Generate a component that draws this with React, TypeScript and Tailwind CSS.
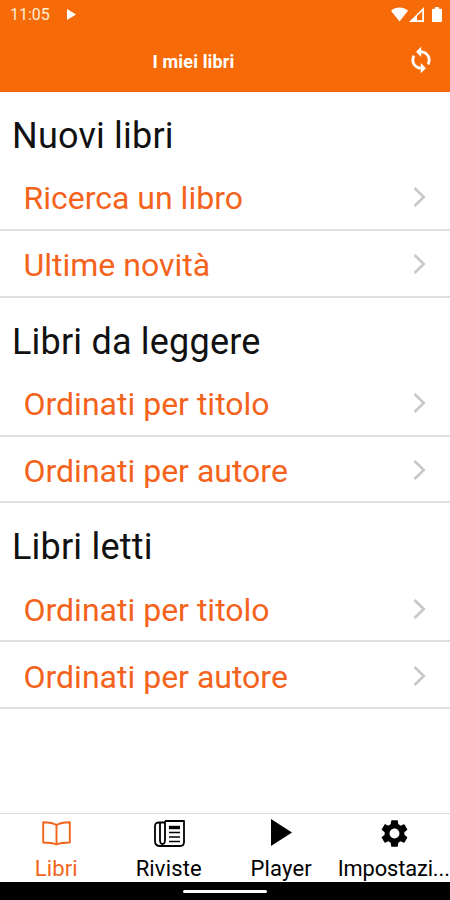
import type { ReactNode } from "react";
import { MdSettings } from "react-icons/md";
import clsx from "clsx";

const sections = [
  { title: "Nuovi libri", items: ["Ricerca un libro", "Ultime novità"] },
  { title: "Libri da leggere", items: ["Ordinati per titolo", "Ordinati per autore"] },
  { title: "Libri letti", items: ["Ordinati per titolo", "Ordinati per autore"] },
];

const SyncIcon = () => (
  <svg className="-mt-[2px] ml-auto" width="28" height="28" viewBox="0 0 24 24" fill="currentColor" stroke="currentColor" strokeWidth="0.4">
    <path d="M12 4V1L8 5l4 4V6c3.310 0 6 2.690 6 6 0 1.010-.250 1.970-.700 2.800l1.460 1.460A7.930 7.930 0 0 0 20 12c0-4.420-3.580-8-8-8z" />
    <path d="M12 18c-3.310 0-6-2.690-6-6 0-1.010.250-1.970.700-2.800L5.240 7.740A7.930 7.930 0 0 0 4 12c0 4.420 3.580 8 8 8v3l4-4-4-4v3z" />
  </svg>
);

const BookIcon = () => (
  <svg className="ml-[1px]" width="29" height="25" viewBox="0 0 29 25" fill="none" stroke="currentColor" strokeWidth="1.9" strokeLinejoin="round">
    <path d="M14.5 4 C11.5 2 6 1.2 1.2 1.2 V21.5 C6 21.5 11.5 22.2 14.5 23.5 C17.5 22.2 23 21.5 27.8 21.5 V1.2 C23 1.2 17.5 2 14.5 4 Z" />
    <path d="M14.5 4 V23.5" />
  </svg>
);

const NewspaperIcon = () => (
  <svg className="ml-[1px]" width="31" height="27" viewBox="0 0 31 27" fill="none" stroke="currentColor" strokeWidth="1.8" strokeLinejoin="round">
    <path d="M11 1 H30 V22 Q30 26 26 26 H6 Q1 26 1 21 V6 Q1 2.5 5 2.5 H11" />
    <path d="M11 1 V20 Q11 24 8.5 24 Q6 24 6 20 V2.5" />
    <path d="M15 7.500 H26" strokeWidth="3.400" />
    <path d="M15 12.500 H26 M15 17 H26 M15 21.500 H26" strokeWidth="1.600" />
  </svg>
);

const PlayIcon = () => (
  <svg className="-mt-[1px]" width="21" height="27" viewBox="0 0 21 27" fill="currentColor">
    <path d="M0 0 L21 13.5 L0 27 Z" />
  </svg>
);

const tabs: { label: string; icon: ReactNode; active?: boolean }[] = [
  { label: "Libri", icon: <BookIcon />, active: true },
  { label: "Riviste", icon: <NewspaperIcon /> },
  { label: "Player", icon: <PlayIcon /> },
  { label: "Impostazi...", icon: <MdSettings className="ml-[2px] size-[33px] shrink-0" /> },
];

const StatusBar = () => (
  <div className="flex h-[30px] items-center justify-between pl-[10px] pr-2 text-white">
    <div className="flex items-center gap-[17px]">
      <span className="text-[16px] text-orange-100">11:05</span>
      <svg className="-mt-[1px]" width="9" height="11" viewBox="0 0 9 11" fill="currentColor">
        <path d="M0 0 L9 5.5 L0 11 Z" />
      </svg>
    </div>
    <div className="-mt-[2px] flex items-center">
      <svg width="17" height="15" viewBox="0 0 17 15" fill="currentColor">
        <path d="M8.5 14.5 L0 3.7 C5 -0.6 12 -0.6 17 3.7 Z" />
      </svg>
      <svg className="ml-[1px]" width="15" height="15" viewBox="0 0 15 15" fill="currentColor">
        <path fillRule="evenodd" d="M0 15 L15 0 V15 Z M8 9 V13.200 H13.200 V4.300 Z" />
      </svg>
      <svg className="ml-[8px]" width="10" height="15" viewBox="0 0 10 15" fill="currentColor">
        <path d="M3 0 H7 V1.7 H9 Q10 1.7 10 2.7 V14 Q10 15 9 15 H1 Q0 15 0 14 V2.7 Q0 1.7 1 1.7 H3 Z" />
      </svg>
    </div>
  </div>
);

const Row = ({ label }: { label: string }) => (
  <div className="flex h-[66.95px] items-center justify-between border-b-2 border-[#e0e0e0] pl-[23.5px] pr-6">
    <span className="pt-[4px] text-[32px] leading-none text-[#f4631c]">{label}</span>
    <svg className="mt-[2px]" width="13" height="20" viewBox="0 0 13 20" fill="none" stroke="#c7c7cc" strokeWidth="2.6">
      <path d="M1.5 1 L10.8 10 L1.5 19" />
    </svg>
  </div>
);

const App = () => {
  return (
    <div className="flex h-[900px] w-[450px] flex-col overflow-hidden bg-white font-[Roboto,sans-serif]">
      <header className="h-[92px] shrink-0 border-b border-[#e85f08] bg-[#f66b08] text-white">
        <StatusBar />
        <div className="flex h-[62px] items-center pr-[15px]">
          <h1 className="w-[387px] text-center text-[18px] font-bold tracking-[0.15px]">I miei libri</h1>
          <SyncIcon />
        </div>
      </header>

      <main className="flex-1">
        {sections.map((section) => (
          <section key={section.title}>
            <h2 className="flex h-[71.85px] items-center pl-3 pt-4 text-[36px] leading-none tracking-[0.2px] text-[#111]">
              {section.title}
            </h2>
            {section.items.map((item) => (
              <Row key={item} label={item} />
            ))}
          </section>
        ))}
      </main>

      <nav className="grid h-[69px] shrink-0 grid-cols-4 border-t border-[#dcdcdc]">
        {tabs.map((tab) => (
          <div
            key={tab.label}
            className={clsx("flex flex-col items-center", tab.active ? "text-[#f4631c]" : "text-black")}
          >
            <div className="flex h-[38px] items-center justify-center">{tab.icon}</div>
            <span
              className={clsx(
                "mt-[3px] leading-[28px] whitespace-nowrap",
                tab.label.endsWith("...") ? "text-[21.8px] tracking-[-0.1px]" : "text-[22px] tracking-[0.15px]"
              )}
            >
              {tab.label}
            </span>
          </div>
        ))}
      </nav>

      <div className="flex h-[18px] shrink-0 justify-center bg-black pt-2">
        <div className="h-[3px] w-[84px] rounded-full bg-white" />
      </div>
    </div>
  );
};

export default App;
